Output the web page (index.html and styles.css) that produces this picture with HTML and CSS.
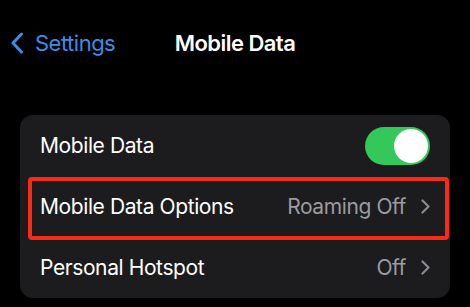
FILE: index.html
```html
<!DOCTYPE html>
<html lang="en">
<head>
    <meta charset="UTF-8">
    <meta name="viewport" content="width=device-width, initial-scale=1.0">
    <title>Mobile Data</title>
    <link rel="stylesheet" href="styles.css">
</head>
<body>
    <div class="navbar">
        <a class="back">
            <svg class="back-icon" width="14" height="22" viewBox="0 0 14 22">
                <path d="M11.5 2 L3 11 L11.5 20" fill="none" stroke="#3b8ee6" stroke-width="3" stroke-linecap="round" stroke-linejoin="round"/>
            </svg>
            <span>Settings</span>
        </a>
        <div class="title">Mobile Data</div>
    </div>

    <div class="group">
        <div class="row">
            <span class="label">Mobile Data</span>
            <div class="switch on"><div class="knob"></div></div>
        </div>
        <div class="row highlighted">
            <span class="label">Mobile Data Options</span>
            <span class="value">Roaming Off</span>
            <svg class="chevron" width="9" height="15" viewBox="0 0 9 15">
                <path d="M1.5 1.5 L7.5 7.5 L1.5 13.5" fill="none" stroke="#8a8a8f" stroke-width="2.2" stroke-linecap="round" stroke-linejoin="round"/>
            </svg>
        </div>
        <div class="row">
            <span class="label">Personal Hotspot</span>
            <span class="value">Off</span>
            <svg class="chevron" width="9" height="15" viewBox="0 0 9 15">
                <path d="M1.5 1.5 L7.5 7.5 L1.5 13.5" fill="none" stroke="#8a8a8f" stroke-width="2.2" stroke-linecap="round" stroke-linejoin="round"/>
            </svg>
        </div>
    </div>
</body>
</html>
```

FILE: styles.css
```css
body {
  margin: 0;
  background-color: #000;
  font-family: Inter, "Noto Sans", sans-serif;
  color: #fff;
  height: 307px;
  overflow: hidden;
}

.navbar {
  position: relative;
  display: flex;
  align-items: center;
  height: 86px;
  padding-left: 10px;
}

.back {
  display: flex;
  align-items: center;
  gap: 11px;
  color: #3b8ee6;
  font-size: 22px;
  letter-spacing: -0.5px;
  cursor: pointer;
}

.title {
  position: absolute;
  left: 0;
  right: 0;
  text-align: center;
  font-size: 22px;
  font-weight: 600;
  letter-spacing: -0.55px;
  pointer-events: none;
}

.group {
  margin: 29px 20px 0;
  background-color: #1c1c1e;
  border-radius: 13px;
}

.row {
  position: relative;
  display: flex;
  align-items: center;
  height: 61px;
  padding: 0 20px;
  font-size: 21px;
  letter-spacing: -0.4px;
}

.label {
  flex: 1;
}

.value {
  color: #9b9ba0;
  margin-right: 15px;
}

.highlighted::after {
  content: "";
  position: absolute;
  top: 1px;
  bottom: -3px;
  left: 8px;
  right: 1px;
  border: 4.5px solid #fb2a14;
  border-radius: 4px;
}

.switch {
  width: 65px;
  height: 38px;
  border-radius: 19px;
  background-color: #34c759;
  display: flex;
  align-items: center;
  padding: 2px;
  box-sizing: border-box;
}

.switch.on {
  justify-content: flex-end;
}

.knob {
  width: 34px;
  height: 34px;
  border-radius: 50%;
  background-color: #fff;
}
```
